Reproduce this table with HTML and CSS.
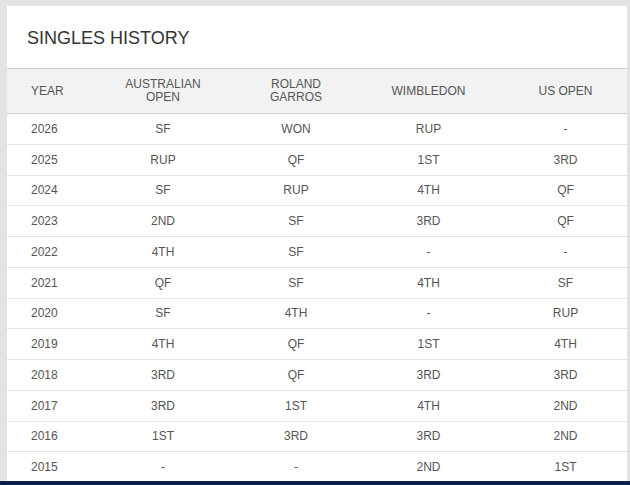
FILE: index.html
```html
<!DOCTYPE html>
<html>
<head>
<meta charset="utf-8">
<link rel="stylesheet" href="styles.css">
</head>
<body>
<div class="page">
  <section class="card">
    <h2 class="title">SINGLES HISTORY</h2>
    <table class="history">
      <colgroup>
        <col class="c-year"><col class="c-ao"><col class="c-rg"><col class="c-wim"><col class="c-us">
      </colgroup>
      <thead>
        <tr><th class="year">YEAR</th><th>AUSTRALIAN<br>OPEN</th><th>ROLAND<br>GARROS</th><th>WIMBLEDON</th><th>US OPEN</th></tr>
      </thead>
      <tbody>
        <tr><td class="year">2026</td><td>SF</td><td>WON</td><td>RUP</td><td>-</td></tr>
        <tr><td class="year">2025</td><td>RUP</td><td>QF</td><td>1ST</td><td>3RD</td></tr>
        <tr><td class="year">2024</td><td>SF</td><td>RUP</td><td>4TH</td><td>QF</td></tr>
        <tr><td class="year">2023</td><td>2ND</td><td>SF</td><td>3RD</td><td>QF</td></tr>
        <tr><td class="year">2022</td><td>4TH</td><td>SF</td><td>-</td><td>-</td></tr>
        <tr><td class="year">2021</td><td>QF</td><td>SF</td><td>4TH</td><td>SF</td></tr>
        <tr><td class="year">2020</td><td>SF</td><td>4TH</td><td>-</td><td>RUP</td></tr>
        <tr><td class="year">2019</td><td>4TH</td><td>QF</td><td>1ST</td><td>4TH</td></tr>
        <tr><td class="year">2018</td><td>3RD</td><td>QF</td><td>3RD</td><td>3RD</td></tr>
        <tr><td class="year">2017</td><td>3RD</td><td>1ST</td><td>4TH</td><td>2ND</td></tr>
        <tr><td class="year">2016</td><td>1ST</td><td>3RD</td><td>3RD</td><td>2ND</td></tr>
        <tr><td class="year">2015</td><td>-</td><td>-</td><td>2ND</td><td>1ST</td></tr>
      </tbody>
    </table>
  </section>
</div>
<footer class="bar"></footer>
</body>
</html>
```
FILE: styles.css
```css
html, body {
  margin: 0;
  padding: 0;
}
body {
  background: #e2e3e5;
  font-family: "Liberation Sans", Arial, sans-serif;
  height: 485px;
  overflow: hidden;
}
.page {
  padding: 6px 3px 0 7px;
}
.card {
  background: #fff;
  width: 620px;
}
.title {
  margin: 0;
  padding: 22px 20px 19px;
  font-size: 18px;
  line-height: 21px;
  font-weight: normal;
  color: #333;
}
.history {
  width: 620px;
  border-collapse: collapse;
  table-layout: fixed;
  font-size: 12px;
  color: #555;
}
.c-year { width: 80px; }
.c-ao { width: 152px; }
.c-rg { width: 114px; }
.c-wim { width: 151px; }
.c-us { width: 123px; }
.history thead tr {
  background: #f2f2f2;
  border-top: 1px solid #cbd1d5;
  border-bottom: 1px solid #cbd1d5;
}
.history th {
  height: 44px;
  padding: 0;
  font-weight: normal;
  line-height: 13px;
  text-align: center;
  vertical-align: middle;
}
.history td {
  height: 29.75px;
  padding: 0;
  line-height: 14px;
  text-align: center;
  vertical-align: middle;
  border-bottom: 1px solid #e6e6e6;
}
.history .year {
  text-align: left;
  padding-left: 24px;
}
.bar {
  position: absolute;
  left: 0;
  right: 0;
  top: 481px;
  height: 4px;
  background: #0e1f47;
}
```
